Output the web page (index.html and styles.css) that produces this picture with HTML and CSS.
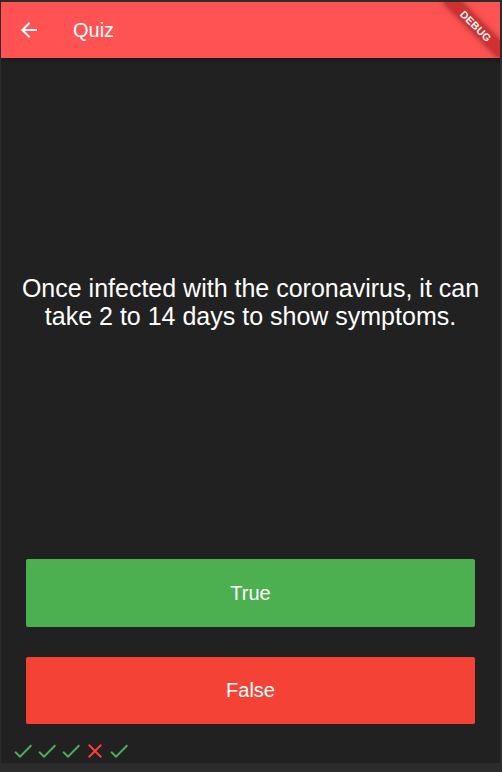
FILE: index.html
```
<!DOCTYPE html>
<html>
<head>
<meta charset="utf-8">
<link rel="stylesheet" href="styles.css">
</head>
<body>
<div class="app">
  <header class="appbar">
    <svg class="back" viewBox="0 0 24 24" width="24" height="24"><path fill="#fff" d="M20 11H7.83l5.59-5.59L12 4l-8 8 8 8 1.41-1.41L7.83 13H20v-2z"/></svg>
    <span class="title">Quiz</span>
  </header>
  <main class="body">
    <div class="question"><p>Once infected with the coronavirus, it can take 2 to 14 days to show symptoms.</p></div>
    <div class="slot"><button class="btn btn-true">True</button></div>
    <div class="slot"><button class="btn btn-false">False</button></div>
    <div class="score">
      <svg viewBox="0 0 24 24" width="24" height="24"><path fill="#4caf50" d="M9 16.17L4.83 12l-1.42 1.41L9 19 21 7l-1.41-1.41z"/></svg>
      <svg viewBox="0 0 24 24" width="24" height="24"><path fill="#4caf50" d="M9 16.17L4.83 12l-1.42 1.41L9 19 21 7l-1.41-1.41z"/></svg>
      <svg viewBox="0 0 24 24" width="24" height="24"><path fill="#4caf50" d="M9 16.17L4.83 12l-1.42 1.41L9 19 21 7l-1.41-1.41z"/></svg>
      <svg viewBox="0 0 24 24" width="24" height="24"><path fill="#f44336" d="M19 6.41L17.59 5 12 10.59 6.41 5 5 6.41 10.59 12 5 17.59 6.41 19 12 13.41 17.59 19 19 17.59 13.41 12z"/></svg>
      <svg viewBox="0 0 24 24" width="24" height="24"><path fill="#4caf50" d="M9 16.17L4.83 12l-1.42 1.41L9 19 21 7l-1.41-1.41z"/></svg>
    </div>
  </main>
  <div class="banner-wrap"><div class="banner">DEBUG</div></div>
</div>
</body>
</html>
```
FILE: styles.css
```
* { box-sizing: border-box; }
html, body { margin: 0; padding: 0; }
body {
  background: #2c2c2c;
  width: 502px;
  height: 772px;
  overflow: hidden;
  font-family: "Liberation Sans", Arial, sans-serif;
}
.app {
  position: relative;
  margin: 2px 0 0 1px;
  width: 499px;
  height: 761px;
  background: #212121;
  display: flex;
  flex-direction: column;
  overflow: hidden;
}
.appbar {
  height: 56px;
  flex: none;
  background: #ff5252;
  display: flex;
  align-items: center;
  padding-left: 16px;
  box-shadow: 0 2px 4px rgba(0,0,0,0.25);
  position: relative;
  z-index: 1;
}
.back { display: block; flex: none; }
.title {
  margin-left: 32px;
  color: #fff;
  font-size: 20px;
  line-height: 24px;
}
.body {
  flex: 1;
  display: grid;
  grid-template-rows: minmax(0, 5fr) minmax(0, 1fr) minmax(0, 1fr) 24px;
  padding: 0 10px;
  min-height: 0;
}
.question {
  display: flex;
  align-items: center;
  justify-content: center;
  padding: 10px;
  min-height: 0;
}
.question p {
  margin: 0;
  color: #fff;
  font-size: 25px;
  line-height: 28.5px;
  text-align: center;
  padding-top: 2px;
}
.slot {
  padding: 15px;
  display: flex;
  min-height: 0;
}
.btn {
  flex: 1;
  border: none;
  border-radius: 2px;
  color: #fff;
  font-family: "Liberation Sans", Arial, sans-serif;
  font-size: 20px;
  padding: 0;
  margin: 0;
}
.btn-true { background: #4caf50; }
.btn-false { background: #f44336; }
.score {
  height: 24px;
  display: flex;
}
.score svg { display: block; }
.banner-wrap {
  position: absolute;
  top: 0;
  right: 0;
  width: 80px;
  height: 80px;
  overflow: hidden;
  z-index: 2;
  pointer-events: none;
}
.banner {
  position: absolute;
  width: 80px;
  height: 12px;
  left: 80px;
  top: 24px;
  margin-left: -64px;
  margin-top: -6px;
  transform: rotate(45deg);
  background: rgba(183, 28, 28, 0.63);
  box-shadow: 0 0 6px rgba(0,0,0,0.5);
  color: #fff;
  font-family: "Liberation Sans", Arial, sans-serif;
  font-weight: bold;
  font-size: 10.5px;
  line-height: 12px;
  text-align: center;
  letter-spacing: 0.3px;
}
```
